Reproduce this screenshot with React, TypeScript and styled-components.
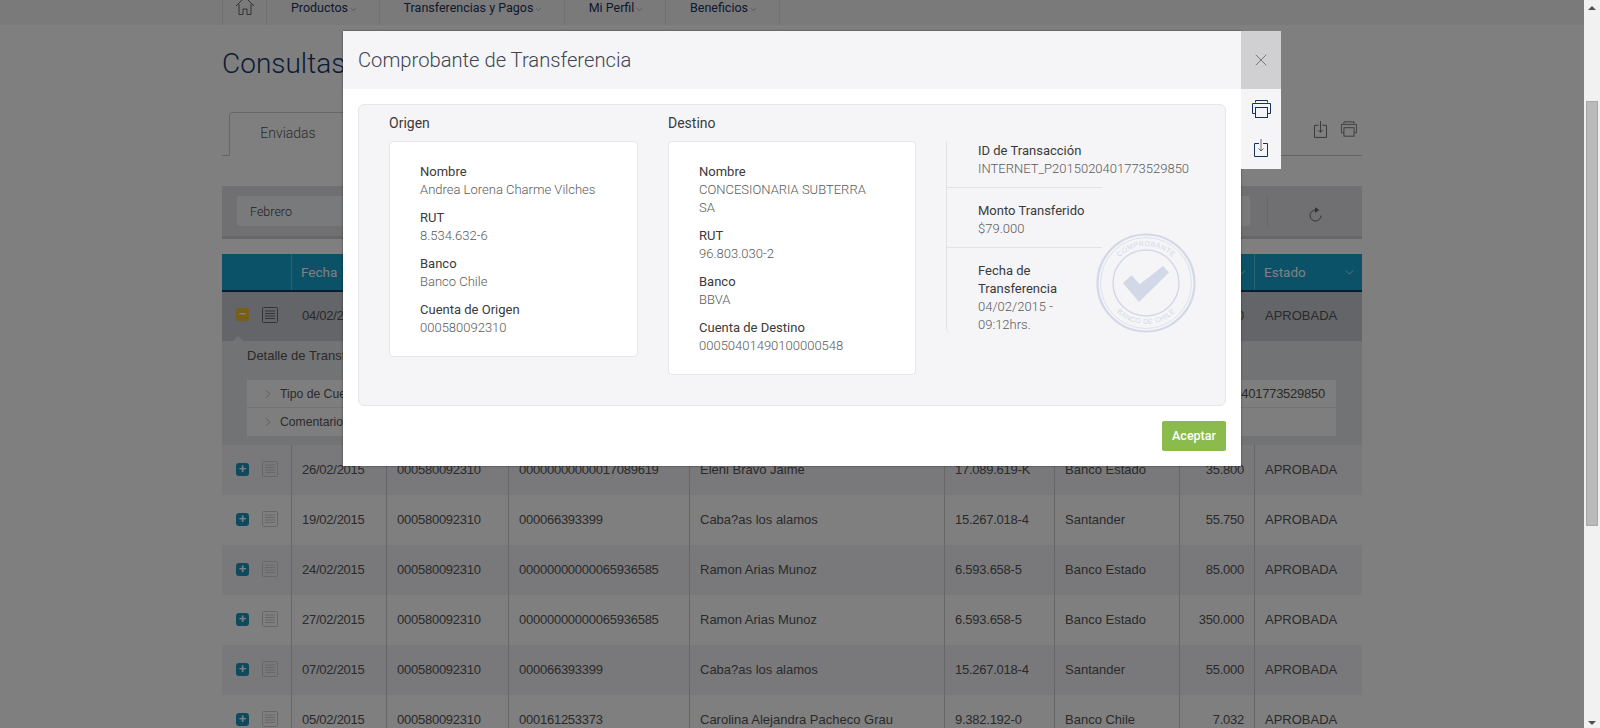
import React from "react";
import styled, { createGlobalStyle } from "styled-components";
import { ChevronDown, ChevronRight, X } from "lucide-react";

const COLUMNS = "69px 95px 122px 181px 255px 110px 125px 75px 108px";

type Row = {
    date: string;
    account: string;
    target: string;
    name: string;
    rut: string;
    bank: string;
    amount: string;
};

const rows: Row[] = [
    { date: "26/02/2015", account: "000580092310", target: "00000000000017089619", name: "Eleni Bravo Jaime", rut: "17.089.619-K", bank: "Banco Estado", amount: "35.800" },
    { date: "19/02/2015", account: "000580092310", target: "000066393399", name: "Caba?as los alamos", rut: "15.267.018-4", bank: "Santander", amount: "55.750" },
    { date: "24/02/2015", account: "000580092310", target: "00000000000065936585", name: "Ramon Arias Munoz", rut: "6.593.658-5", bank: "Banco Estado", amount: "85.000" },
    { date: "27/02/2015", account: "000580092310", target: "00000000000065936585", name: "Ramon Arias Munoz", rut: "6.593.658-5", bank: "Banco Estado", amount: "350.000" },
    { date: "07/02/2015", account: "000580092310", target: "000066393399", name: "Caba?as los alamos", rut: "15.267.018-4", bank: "Santander", amount: "55.000" },
    { date: "05/02/2015", account: "000580092310", target: "000161253373", name: "Carolina Alejandra Pacheco Grau", rut: "9.382.192-0", bank: "Banco Chile", amount: "7.032" },
];

const headers = ["Fecha", "Cuenta Origen", "Cuenta Destino", "Nombre", "RUT", "Banco", "Monto", "Estado"];

const navItems = [
    { label: "Productos", width: 113 },
    { label: "Transferencias y Pagos", width: 185 },
    { label: "Mi Perfil", width: 101 },
    { label: "Beneficios", width: 114 },
];

function HomeIcon() {
    return (
        <svg width="20" height="22" viewBox="0 0 20 22" fill="none" stroke="#666" strokeWidth="1">
            <path d="M1 10 L10 1 L19 10 M4 8 V18.5 H8 V13 H12 V18.5 H16 V8" />
        </svg>
    );
}

function PrintIcon({ width = 19, height = 18, color = "#14305c" }: { width?: number; height?: number; color?: string }) {
    return (
        <svg width={width} height={height} viewBox="0 0 19 18" fill="none" stroke={color} strokeWidth="1">
            <path d="M3.5 2.5 V0.5 H15.5 V2.5" />
            <path d="M3.5 13.5 H0.5 V3.5 H18.5 V13.5 H15.5" />
            <rect x="3.5" y="7.5" width="12" height="10" />
        </svg>
    );
}

function DownloadIcon({ width = 14, height = 18, color = "#14305c" }: { width?: number; height?: number; color?: string }) {
    return (
        <svg width={width} height={height} viewBox="0 0 14 18" fill="none" strokeWidth="1">
            <path d="M5 4.5 H0.5 V17.5 H13.5 V4.5 H9" stroke={color} />
            <path d="M7 0 V12 M4.5 9.5 L7 12 L9.5 9.5" stroke="#667" />
        </svg>
    );
}

function RefreshIcon() {
    return (
        <svg width="14" height="15" viewBox="0 0 14 15" fill="none" stroke="#666" strokeWidth="1">
            <path d="M7.5 3 A5.5 5.5 0 1 0 13 8.5" />
            <path d="M7.5 0.8 L10.5 3 L7.5 5.2 Z" fill="#666" />
        </svg>
    );
}

function DocIcon() {
    return (
        <svg width="16" height="16" viewBox="0 0 16 16" fill="none" stroke="currentColor" strokeWidth="1">
            <rect x="0.5" y="0.5" width="15" height="15" rx="1" />
            <path d="M3 4 H13 M3 6.5 H13 M3 9 H13 M3 11.5 H13" />
        </svg>
    );
}

function Stamp() {
    return (
        <svg width="100" height="100" viewBox="0 0 100 100" fill="none" stroke="#d3d8e6">
            <circle cx="50" cy="50" r="48.5" strokeWidth="2.2" />
            <circle cx="50" cy="50" r="45.5" strokeWidth="0.7" />
            <circle cx="50" cy="50" r="33" strokeWidth="1.4" />
            <path d="M27 50 L35.5 42.2 L43.8 51.2 L67 33 L73 39.5 L43 69 Z" fill="#d3d8e6" stroke="none" />
            <defs>
                <path id="stampTop" d="M13 50 A37 37 0 0 1 87 50" />
                <path id="stampBottom" d="M9 50 A41 41 0 0 0 91 50" />
            </defs>
            <text fontFamily="'Liberation Sans', sans-serif" fontSize="7" fill="#d3d8e6" stroke="none" letterSpacing="0.4">
                <textPath href="#stampTop" startOffset="50%" textAnchor="middle">COMPROBANTE</textPath>
            </text>
            <text fontFamily="'Liberation Sans', sans-serif" fontSize="7" fill="#d3d8e6" stroke="none" letterSpacing="0.4">
                <textPath href="#stampBottom" startOffset="50%" textAnchor="middle">BANCO DE CHILE</textPath>
            </text>
        </svg>
    );
}

function Field({ label, value }: { label: string; value: string }) {
    return (
        <FieldBox>
            <FieldLabel>{label}</FieldLabel>
            <FieldValue>{value}</FieldValue>
        </FieldBox>
    );
}

export default function App() {
    return (
        <>
            <GlobalStyle />
            <Screen>
                <Viewport>
                    <TopNav>
                        <NavInner>
                            <HomeItem $width={44}><HomeIcon /></HomeItem>
                            {navItems.map((item) => (
                                <NavItem key={item.label} $width={item.width}>
                                    {item.label}
                                    <ChevronDown size={9} strokeWidth={1} />
                                </NavItem>
                            ))}
                        </NavInner>
                    </TopNav>

                    <Content>
                        <Title>Consultas de Transferencias</Title>

                        <TabRow>
                            <Tab>Enviadas</Tab>
                            <TabActions>
                                <DownloadIcon width={13} height={17} color="#666" />
                                <PrintIcon width={16} height={16} color="#666" />
                            </TabActions>
                        </TabRow>

                        <FilterBar>
                            <FilterInput>Febrero</FilterInput>
                            <RefreshBox><RefreshIcon /></RefreshBox>
                        </FilterBar>

                        <HeaderRow>
                            <HeaderCell />
                            {headers.map((title) => (
                                <HeaderCell key={title}>
                                    {title}
                                    <ChevronDown size={13} strokeWidth={1.3} />
                                </HeaderCell>
                            ))}
                        </HeaderRow>

                        <DataRow $tone="open">
                            <IconCell>
                                <ToggleBadge $open>−</ToggleBadge>
                                <DocMark $strong><DocIcon /></DocMark>
                            </IconCell>
                            <Cell $tight>04/02/2015</Cell>
                            <Cell $tight>000580092310</Cell>
                            <Cell $tight>00050401490100000548</Cell>
                            <Cell>CONCESIONARIA SUBTERRA SA</Cell>
                            <Cell $tight>96.803.030-2</Cell>
                            <Cell>BBVA</Cell>
                            <Cell $right $tight>79.000</Cell>
                            <Cell>APROBADA</Cell>
                            <Caret />
                        </DataRow>

                        <DetailPanel>
                            <DetailTitle>Detalle de Transferencia</DetailTitle>
                            <DetailList>
                                <DetailRow>
                                    <ChevronRight size={14} strokeWidth={1} />
                                    <span>Tipo de Cuenta</span>
                                    <DetailValue>INTERNET_P2015020401773529850</DetailValue>
                                </DetailRow>
                                <DetailRow>
                                    <ChevronRight size={14} strokeWidth={1} />
                                    <span>Comentario</span>
                                </DetailRow>
                            </DetailList>
                        </DetailPanel>

                        {rows.map((row, index) => (
                            <DataRow key={row.date} $tone={index % 2 === 0 ? "alt" : "plain"}>
                                <IconCell>
                                    <ToggleBadge>+</ToggleBadge>
                                    <DocMark><DocIcon /></DocMark>
                                </IconCell>
                                <Cell $tight>{row.date}</Cell>
                                <Cell $tight>{row.account}</Cell>
                                <Cell $tight>{row.target}</Cell>
                                <Cell>{row.name}</Cell>
                                <Cell $tight>{row.rut}</Cell>
                                <Cell>{row.bank}</Cell>
                                <Cell $right $tight>{row.amount}</Cell>
                                <Cell>APROBADA</Cell>
                            </DataRow>
                        ))}
                    </Content>

                    <Overlay>
                        <ModalFrame>
                            <ModalBox>
                                <ModalHeader>Comprobante de Transferencia</ModalHeader>
                                <ModalBody>
                                    <Receipt>
                                        <PartyColumn $width={249}>
                                            <PartyTitle>Origen</PartyTitle>
                                            <PartyCard>
                                                <Field label="Nombre" value="Andrea Lorena Charme Vilches" />
                                                <Field label="RUT" value="8.534.632-6" />
                                                <Field label="Banco" value="Banco Chile" />
                                                <Field label="Cuenta de Origen" value="000580092310" />
                                            </PartyCard>
                                        </PartyColumn>
                                        <PartyColumn $width={248}>
                                            <PartyTitle>Destino</PartyTitle>
                                            <PartyCard>
                                                <Field label="Nombre" value="CONCESIONARIA SUBTERRA SA" />
                                                <Field label="RUT" value="96.803.030-2" />
                                                <Field label="Banco" value="BBVA" />
                                                <Field label="Cuenta de Destino" value="00050401490100000548" />
                                            </PartyCard>
                                        </PartyColumn>
                                        <SummaryColumn>
                                            <SummaryItem>
                                                <FieldLabel>ID de Transacción</FieldLabel>
                                                <NoWrapValue>INTERNET_P2015020401773529850</NoWrapValue>
                                            </SummaryItem>
                                            <SummaryItem>
                                                <FieldLabel>Monto Transferido</FieldLabel>
                                                <FieldValue>$79.000</FieldValue>
                                            </SummaryItem>
                                            <SummaryItem $last>
                                                <FieldLabel>Fecha de Transferencia</FieldLabel>
                                                <FieldValue>04/02/2015 - 09:12hrs.</FieldValue>
                                            </SummaryItem>
                                            <StampBox><Stamp /></StampBox>
                                        </SummaryColumn>
                                    </Receipt>
                                </ModalBody>
                                <ModalFooter>
                                    <AcceptButton>Aceptar</AcceptButton>
                                </ModalFooter>
                            </ModalBox>
                            <SideRail>
                                <CloseButton><X size={20} strokeWidth={1} /></CloseButton>
                                <RailActions>
                                    <PrintIcon />
                                    <DownloadIcon />
                                </RailActions>
                            </SideRail>
                        </ModalFrame>
                    </Overlay>
                </Viewport>

                <ScrollTrack>
                    <ScrollArrow />
                    <ScrollThumb />
                    <ScrollArrow $down />
                </ScrollTrack>
            </Screen>
        </>
    );
}

const GlobalStyle = createGlobalStyle`
    html, body {
        margin: 0;
        padding: 0;
        overflow: hidden;
        background: #fff;
    }
    * {
        box-sizing: border-box;
    }
`;

const Screen = styled.div`
    width: 1600px;
    height: 728px;
    display: flex;
    overflow: hidden;
`;

const Viewport = styled.div`
    position: relative;
    width: 1584px;
    height: 728px;
    overflow: hidden;
    background: #fff;
`;

const TopNav = styled.div`
    height: 25px;
    background: #f4f4f7;
    padding-left: 222px;
`;

const NavInner = styled.div`
    display: flex;
    height: 25px;
    overflow: hidden;
    border-right: 1px solid #e2e2e6;
    width: 558px;
`;

const NavItem = styled.div<{ $width: number }>`
    flex: none;
    width: ${(p) => p.$width}px;
    display: flex;
    align-items: flex-start;
    justify-content: center;
    gap: 1px;
    padding-left: 3px;
    border-left: 1px solid #e2e2e6;
    font: 400 12.5px/16px Roboto, sans-serif;
    color: #1d3358;
    white-space: nowrap;

    svg {
        margin-top: 5px;
        color: #555;
    }
`;

const HomeItem = styled(NavItem)`
    padding-left: 0;

    svg {
        margin-top: -4px;
    }
`;

const Content = styled.div`
    width: 1140px;
    margin-left: 222px;
`;

const Title = styled.h1`
    margin: 0;
    padding-top: 19px;
    height: 87px;
    font: 300 28px/40px Roboto, sans-serif;
    color: #17386b;
    white-space: nowrap;
`;

const TabRow = styled.div`
    display: flex;
    height: 44px;
    padding-left: 7px;
    border-bottom: 1px solid #c8c8c8;
    justify-content: space-between;
`;

const Tab = styled.div`
    width: 118px;
    height: 44px;
    padding-top: 10px;
    text-align: center;
    border: 1px solid #cfcfcf;
    border-bottom-color: #fff;
    border-radius: 4px 4px 0 0;
    background: #fff;
    font: 300 14px/20px Roboto, sans-serif;
    color: #555;
`;

const TabActions = styled.div`
    display: flex;
    align-items: flex-start;
    gap: 14px;
    padding: 9px 5px 0 0;
`;

const FilterBar = styled.div`
    display: flex;
    height: 53px;
    margin-top: 30px;
    padding: 10px 0 0 15px;
    background: #e0e1e5;
    border-bottom: 3px solid #cdced2;
`;

const FilterInput = styled.div`
    width: 1013px;
    height: 30px;
    padding-left: 13px;
    border-radius: 3px;
    background: #f3f4f6;
    font: 300 12.5px/32px Roboto, sans-serif;
    color: #444;
`;

const RefreshBox = styled.div`
    margin-left: 17px;
    height: 30px;
    flex: 1;
    display: flex;
    align-items: center;
    justify-content: center;
    padding-top: 6px;
    border-left: 1px solid #cdced2;
`;

const HeaderRow = styled.div`
    display: grid;
    grid-template-columns: ${COLUMNS};
    height: 38px;
    margin-top: 15px;
    background: #17a3cf;
    border-bottom: 2px solid #0b3c5e;
`;

const HeaderCell = styled.div`
    display: flex;
    align-items: center;
    justify-content: space-between;
    padding: 0 6px 0 9px;
    border-left: 1px solid #5cc0de;
    font: 400 13.5px/36px Roboto, sans-serif;
    color: #fff;
    white-space: nowrap;
    overflow: hidden;

    &:first-child {
        border-left: none;
    }
`;

const tones = { open: "#c9cbd0", alt: "#f2f3f7", plain: "#fff" };

const DataRow = styled.div<{ $tone: keyof typeof tones }>`
    position: relative;
    display: grid;
    grid-template-columns: ${COLUMNS};
    height: ${(p) => (p.$tone === "open" ? "49px" : "50px")};
    background: ${(p) => tones[p.$tone]};

    & > * {
        padding-bottom: ${(p) => (p.$tone === "open" ? "2px" : "0")};
    }
`;

const Cell = styled.div<{ $right?: boolean; $tight?: boolean }>`
    display: flex;
    align-items: center;
    justify-content: ${(p) => (p.$right ? "flex-end" : "flex-start")};
    padding-left: 10px;
    padding-right: 10px;
    border-left: 1px solid #cdcdcf;
    font: 400 13px/18px "Liberation Sans", Arial, sans-serif;
    letter-spacing: ${(p) => (p.$tight ? "-0.25px" : "0")};
    color: #555;
    white-space: nowrap;
    overflow: hidden;
`;

const IconCell = styled.div`
    display: flex;
    align-items: center;
    gap: 13px;
    padding-left: 14px;

    & > * {
        margin-bottom: 2px;
    }
`;

const ToggleBadge = styled.span<{ $open?: boolean }>`
    width: 13px;
    height: 13px;
    border-radius: 3px;
    background: ${(p) => (p.$open ? "#f0bd2d" : "#1f93bb")};
    color: #fff;
    font: 700 13px/12px "Liberation Sans", sans-serif;
    text-align: center;
`;

const DocMark = styled.span<{ $strong?: boolean }>`
    display: flex;
    color: ${(p) => (p.$strong ? "#666" : "#cfcfd2")};
`;

const Caret = styled.span`
    position: absolute;
    left: 11px;
    bottom: 0;
    padding: 0 !important;
    border-left: 5px solid transparent;
    border-right: 5px solid transparent;
    border-bottom: 5px solid #e5e7ea;
`;

const DetailPanel = styled.div`
    height: 104px;
    padding: 5px 25px 0;
    background: #e5e7ea;
`;

const DetailTitle = styled.div`
    height: 34px;
    font: 400 13px/20px "Liberation Sans", Arial, sans-serif;
    color: #555;
`;

const DetailList = styled.div`
    width: 1089px;
    background: #fdfdfd;
`;

const DetailRow = styled.div`
    display: flex;
    align-items: center;
    height: 28px;
    padding: 0 11px 0 14px;
    gap: 5px;
    border-bottom: 1px solid #e5e7ea;
    font: 400 12.2px/18px "Liberation Sans", Arial, sans-serif;
    color: #555;

    svg {
        color: #888;
    }

    &:last-child {
        border-bottom: none;
    }
`;

const DetailValue = styled.span`
    margin-left: auto;
    font-size: 13px;
    letter-spacing: -0.25px;
`;

const Overlay = styled.div`
    position: absolute;
    inset: 0;
    background: rgba(0, 0, 0, 0.5);
    padding: 31px 0 0 343px;
`;

const ModalFrame = styled.div`
    display: flex;
    align-items: flex-start;
`;

const ModalBox = styled.div`
    width: 898px;
    background: #fff;
    box-shadow: 0 0 2px rgba(0, 0, 0, 0.5);
`;

const ModalHeader = styled.div`
    height: 58px;
    padding-left: 15px;
    background: #f5f5f8;
    font: 300 20.2px/58px Roboto, sans-serif;
    color: #3f4450;
`;

const ModalBody = styled.div`
    padding: 15px 15px 0 15px;
`;

const Receipt = styled.div`
    display: flex;
    align-items: flex-start;
    gap: 30px;
    height: 302px;
    padding: 8px 0 0 30px;
    background: #f5f5f8;
    border: 1px solid #e7e7ea;
    border-radius: 6px;
`;

const PartyColumn = styled.div<{ $width: number }>`
    width: ${(p) => p.$width}px;
`;

const PartyTitle = styled.div`
    height: 28px;
    font: 400 14px/20px Roboto, sans-serif;
    color: #3a3a3a;
`;

const PartyCard = styled.div`
    display: flex;
    flex-direction: column;
    gap: 10px;
    padding: 21px 40px 19px 30px;
    background: #fff;
    border: 1px solid #e7e7ea;
    border-radius: 4px;
`;

const FieldBox = styled.div`
    display: flex;
    flex-direction: column;
`;

const FieldLabel = styled.div`
    font: 400 13px/18px Roboto, sans-serif;
    color: #3a3a3a;
`;

const FieldValue = styled.div`
    font: 300 13px/18px Roboto, sans-serif;
    color: #5a5a5a;
`;

const NoWrapValue = styled(FieldValue)`
    white-space: nowrap;
`;

const SummaryColumn = styled.div`
    position: relative;
    width: 156px;
    margin-top: 28px;
    border-left: 1px solid #e2e2e6;
    border-radius: 0 0 0 6px;
`;

const SummaryItem = styled.div<{ $last?: boolean }>`
    padding: 14px 0 ${(p) => (p.$last ? "0" : "9px")} 31px;
    border-bottom: ${(p) => (p.$last ? "none" : "1px solid #e2e2e6")};

    &:first-child {
        padding-top: 1px;
    }
`;

const StampBox = styled.div`
    position: absolute;
    left: 149px;
    top: 92px;
`;

const ModalFooter = styled.div`
    display: flex;
    justify-content: flex-end;
    padding: 15px;
`;

const AcceptButton = styled.button`
    width: 64px;
    height: 30px;
    border: none;
    border-radius: 2px;
    background: #8bbb4c;
    color: #fff;
    font: 500 12.5px/30px Roboto, sans-serif;
    padding: 0;
`;

const SideRail = styled.div`
    width: 40px;
    display: flex;
    flex-direction: column;
`;

const CloseButton = styled.div`
    height: 58px;
    display: flex;
    align-items: center;
    justify-content: center;
    background: #d0d0d2;
    color: #666;
`;

const RailActions = styled.div`
    height: 80px;
    display: flex;
    flex-direction: column;
    align-items: center;
    gap: 21px;
    padding-top: 11px;
    background: #f5f5f8;
`;

const ScrollTrack = styled.div`
    width: 16px;
    height: 728px;
    display: flex;
    flex-direction: column;
    align-items: center;
    background: #f1f1f1;
`;

const ScrollArrow = styled.span<{ $down?: boolean }>`
    margin-top: ${(p) => (p.$down ? "195px" : "6px")};
    border-left: 4px solid transparent;
    border-right: 4px solid transparent;
    border-bottom: ${(p) => (p.$down ? "none" : "4px solid #505050")};
    border-top: ${(p) => (p.$down ? "4px solid #505050" : "none")};
`;

const ScrollThumb = styled.div`
    width: 12px;
    height: 425px;
    margin-top: 91px;
    background: #bababa;
    border: 1px solid #a8a8a8;
`;
